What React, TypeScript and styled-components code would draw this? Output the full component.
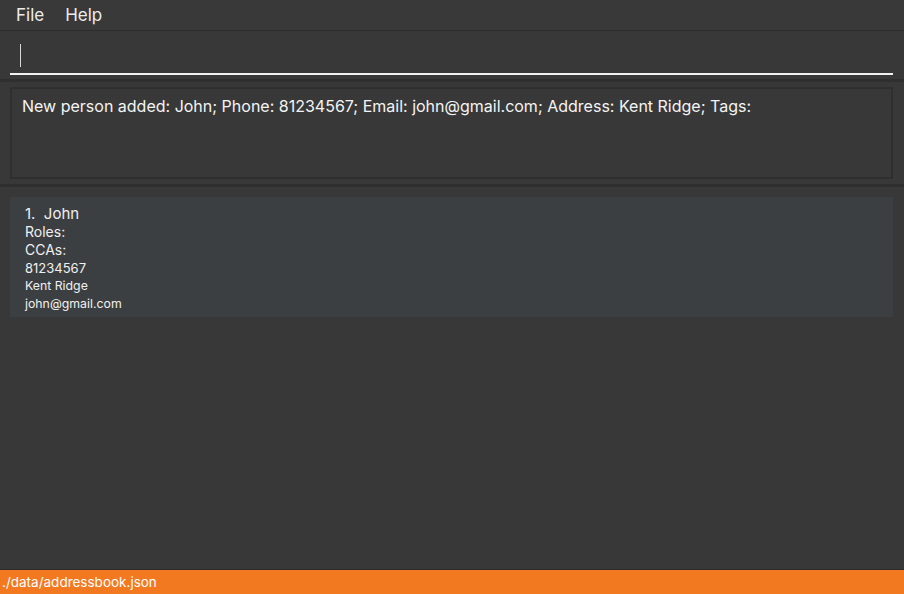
import React from "react";
import styled, { createGlobalStyle } from "styled-components";

const Global = createGlobalStyle`
  html, body { margin: 0; padding: 0; background: #383838; }
  #root { height: 594px; }
  * { box-sizing: border-box; }
`;

const Window = styled.div`
  height: 594px;
  display: flex;
  flex-direction: column;
  background: #383838;
  font-family: Inter, "Open Sans", sans-serif;
  color: #ffffff;
`;

const MenuBar = styled.div`
  height: 31px;
  display: flex;
  align-items: center;
  padding-left: 16px;
  gap: 21px;
  background: #393939;
  border-bottom: 1px solid #2c2c2c;
`;

const MenuItem = styled.span`
  font-size: 17px;
  color: #ececec;
`;

const CommandPane = styled.div`
  height: 51px;
  padding: 0 11px 4px 10px;
  display: flex;
  flex-direction: column;
  justify-content: flex-end;
  border-bottom: 3px solid #2f2f2f;
`;

const CommandField = styled.div`
  height: 31px;
  border-bottom: 2px solid #f2f2f2;
  display: flex;
  align-items: flex-start;
  padding-left: 10px;
`;

const Caret = styled.div`
  width: 1px;
  height: 23px;
  background: #d8d8d8;
`;

const ResultPane = styled.div`
  padding: 5px 11px 5px 10px;
  border-bottom: 3px solid #2f2f2f;
`;

const ResultBox = styled.div`
  height: 92px;
  border: 2px solid #2f2f2f;
  padding: 7px 10px;
  font-size: 16px;
  color: #f4f4f4;
`;

const ListPane = styled.div`
  flex: 1;
  padding: 10px 11px 0 10px;
`;

const Card = styled.div`
  background: #3c3f41;
  padding: 8px 15px 5px 15px;
  display: flex;
  flex-direction: column;
  height: 120px;
`;

const Line = styled.div<{ $size: number }>`
  font-size: ${(p) => p.$size}px;
  line-height: 18px;
  color: #f0f0f0;
  white-space: pre;
`;

const StatusBar = styled.div`
  height: 25px;
  background: #f37921;
  border-top: 1px solid #2a2a2a;
  display: flex;
  align-items: center;
  padding-left: 2px;
  font-size: 13.5px;
  color: #ffffff;
`;

export default function App() {
  return (
    <>
      <Global />
      <Window>
        <MenuBar>
          <MenuItem>File</MenuItem>
          <MenuItem>Help</MenuItem>
        </MenuBar>
        <CommandPane>
          <CommandField>
            <Caret />
          </CommandField>
        </CommandPane>
        <ResultPane>
          <ResultBox>
            New person added: John; Phone: 81234567; Email: john@gmail.com; Address: Kent Ridge; Tags:
          </ResultBox>
        </ResultPane>
        <ListPane>
          <Card>
            <Line $size={15}>1.  John</Line>
            <Line $size={14}>Roles:</Line>
            <Line $size={14}>CCAs:</Line>
            <Line $size={13}>81234567</Line>
            <Line $size={12.3}>Kent Ridge</Line>
            <Line $size={12.3}>john@gmail.com</Line>
          </Card>
        </ListPane>
        <StatusBar>./data/addressbook.json</StatusBar>
      </Window>
    </>
  );
}
